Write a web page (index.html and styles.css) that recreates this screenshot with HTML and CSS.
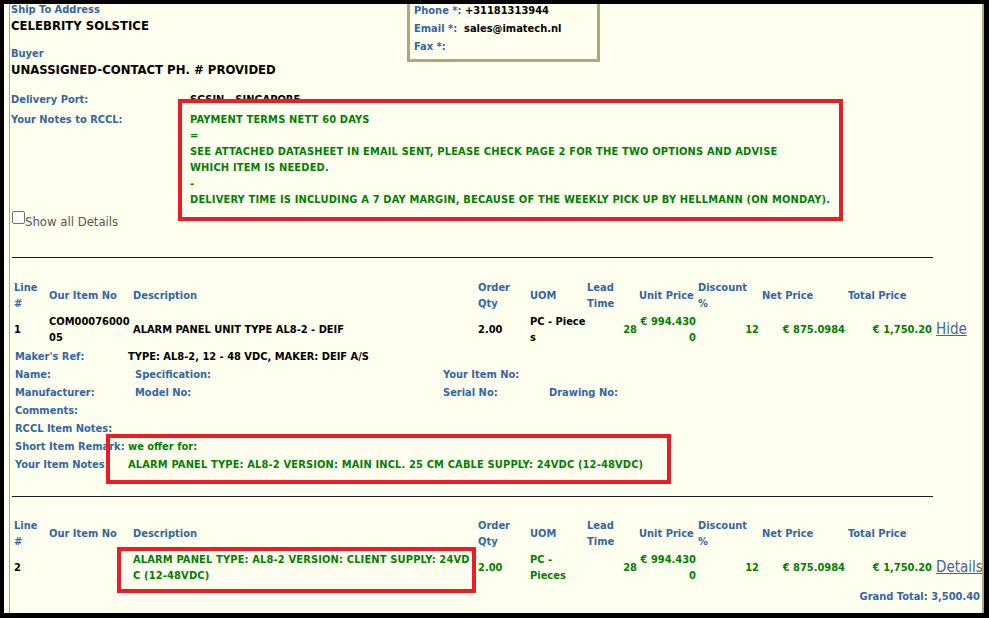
FILE: index.html
```html
<!DOCTYPE html>
<html>
<head>
<meta charset="utf-8">
<title>Quote</title>
<link rel="stylesheet" href="styles.css">
</head>
<body>
<div class="screen">
  <div class="page">
    <div class="sheet">
      <div class="scroll">
        <div class="top">
          <div class="addr">
            <div class="lbl">Ship To Address</div>
            <div class="big">CELEBRITY SOLSTICE</div>
            <div class="lbl buyer">Buyer</div>
            <div class="big">UNASSIGNED-CONTACT PH. # PROVIDED</div>
          </div>
          <div class="contact">
            <div class="crow"><span class="lbl2">Phone *:</span> <span class="val">+31181313944</span></div>
            <div class="crow"><span class="lbl2">Email *:</span>&nbsp; <span class="val">sales@imatech.nl</span></div>
            <div class="crow"><span class="lbl2">Fax *:</span></div>
          </div>
        </div>

        <div class="notes">
          <span class="nl">Delivery Port:</span><span class="val">SGSIN - SINGAPORE</span>
          <span class="nl">Your Notes to RCCL:</span>
          <div class="green">PAYMENT TERMS NETT 60 DAYS<br>=<br>SEE ATTACHED DATASHEET IN EMAIL SENT, PLEASE CHECK PAGE 2 FOR THE TWO OPTIONS AND ADVISE<br>WHICH ITEM IS NEEDED.<br>-<br>DELIVERY TIME IS INCLUDING A 7 DAY MARGIN, BECAUSE OF THE WEEKLY PICK UP BY HELLMANN (ON MONDAY).</div>
        </div>

        <label class="showall"><input type="checkbox" class="cb">Show all Details</label>

        <div class="rule"></div>

        <div class="items">
          <div class="c h">Line #</div>
          <div class="c h c2">Our Item No</div>
          <div class="c h">Description</div>
          <div class="c h">Order Qty</div>
          <div class="c h c5">UOM</div>
          <div class="c h">Lead Time</div>
          <div class="c h c7">Unit Price</div>
          <div class="c h">Discount %</div>
          <div class="c h">Net Price</div>
          <div class="c h">Total Price</div>
          <div class="c"></div>

          <div class="c">1</div>
          <div class="c c2 ba">COM0007600005</div>
          <div class="c">ALARM PANEL UNIT TYPE AL8-2 - DEIF</div>
          <div class="c">2.00</div>
          <div class="c c5 ba">PC - Pieces</div>
          <div class="c num g">28</div>
          <div class="c num c7 g ba">€ 994.4300</div>
          <div class="c num g">12</div>
          <div class="c num g">€ 875.0984</div>
          <div class="c num g">€ 1,750.20</div>
          <div class="c"><a class="lnk" href="#">Hide</a></div>
        </div>

        <div class="details">
          <div class="drow"><span class="dl w113">Maker's Ref:</span><span class="dv">TYPE: AL8-2, 12 - 48 VDC, MAKER: DEIF A/S</span></div>
          <div class="drow"><span class="dl w120">Name:</span><span class="dl w308">Specification:</span><span class="dl">Your Item No:</span></div>
          <div class="drow"><span class="dl w120">Manufacturer:</span><span class="dl w308">Model No:</span><span class="dl w106">Serial No:</span><span class="dl">Drawing No:</span></div>
          <div class="drow"><span class="dl">Comments:</span></div>
          <div class="drow"><span class="dl">RCCL Item Notes:</span></div>
          <div class="drow"><span class="dl w113">Short Item Remark:</span><span class="gv">we offer for:</span></div>
          <div class="drow"><span class="dl w113">Your Item Notes:</span><span class="gv wide">ALARM PANEL TYPE: AL8-2 VERSION: MAIN INCL. 25 CM CABLE SUPPLY: 24VDC (12-48VDC)</span></div>
        </div>

        <div class="rule rule2"></div>

        <div class="items items2">
          <div class="c h">Line #</div>
          <div class="c h c2">Our Item No</div>
          <div class="c h">Description</div>
          <div class="c h">Order Qty</div>
          <div class="c h c5">UOM</div>
          <div class="c h">Lead Time</div>
          <div class="c h c7">Unit Price</div>
          <div class="c h">Discount %</div>
          <div class="c h">Net Price</div>
          <div class="c h">Total Price</div>
          <div class="c"></div>

          <div class="c">2</div>
          <div class="c c2"></div>
          <div class="c g ba wide">ALARM PANEL TYPE: AL8-2 VERSION: CLIENT SUPPLY: 24VDC (12-48VDC)</div>
          <div class="c g">2.00</div>
          <div class="c c5 g">PC - Pieces</div>
          <div class="c num g">28</div>
          <div class="c num c7 g ba">€ 994.4300</div>
          <div class="c num g">12</div>
          <div class="c num g">€ 875.0984</div>
          <div class="c num g">€ 1,750.20</div>
          <div class="c"><a class="lnk" href="#">Details</a></div>
        </div>

        <div class="grand">Grand Total: 3,500.40</div>
      </div>
    </div>
  </div>

  <div class="mark mark1"></div>
  <div class="mark mark2"></div>
  <div class="mark mark3"></div>
</div>
</body>
</html>
```

FILE: styles.css
```css
html, body {
  margin: 0;
  padding: 0;
  background: #000;
}

body {
  font-family: "DejaVu Sans Condensed", "DejaVu Sans", sans-serif;
  font-size: 11px;
  color: #000;
}

.screen {
  position: relative;
  width: 989px;
  height: 618px;
  box-sizing: border-box;
  padding: 4px 5px 5px 4px;
  background: #000;
}

.page {
  height: 609px;
  background: #fffff0;
  padding-left: 5px;
  overflow: hidden;
}

.sheet {
  height: 100%;
  border-left: 1px solid #b3a677;
  border-right: 2px solid #b3a677;
  overflow: hidden;
}

.scroll {
  margin-top: -2px;
}

/* top block */
.top {
  display: flex;
  align-items: flex-start;
}

.addr {
  width: 396px;
  padding-left: 1px;
}

.lbl,
.lbl2,
.nl,
.h,
.dl,
.grand {
  color: #3465a4;
  font-weight: bold;
}

.lbl {
  font-size: 11px;
  line-height: 16px;
}

.big {
  font-size: 13px;
  font-weight: bold;
  line-height: 16px;
  color: #000;
}

.buyer {
  margin-top: 12px;
}

.contact {
  margin-top: -3px;
  width: 193px;
  height: 63px;
  box-sizing: border-box;
  border: 3px solid #b5a67a;
  padding: 0 0 3px 4px;
  font-size: 11px;
  line-height: 18px;
  font-weight: bold;
}

.crow {
  height: 18px;
  white-space: nowrap;
}

.val {
  font-weight: bold;
  color: #000;
}

/* notes */
.notes {
  margin-top: 14px;
  padding-left: 1px;
  display: grid;
  grid-template-columns: 179px auto;
  row-gap: 4px;
  font-size: 11px;
  line-height: 16px;
  font-weight: bold;
}

.green {
  color: #008000;
  font-weight: bold;
  letter-spacing: 0.17px;
}

.wide {
  letter-spacing: 0.15px;
}

.showall {
  margin-top: 6px;
  padding-left: 2px;
  display: flex;
  height: 16px;
  font-size: 13px;
  line-height: 16px;
  color: #555555;
}

.cb {
  -webkit-appearance: none;
  appearance: none;
  flex: none;
  width: 13px;
  height: 13px;
  margin: -3px 0 0 0;
  box-sizing: border-box;
  border: 1px solid #707070;
  border-radius: 2px;
  background: #fff;
}

.rule {
  margin: 27px 0 0 2px;
  width: 921px;
  border-top: 1px solid #1a1a1a;
}

.rule2 {
  margin-top: 22px;
}

/* items table */
.items {
  margin: 21px 0 0 3px;
  display: grid;
  grid-template-columns: 35px 84px 345px 52px 57px 53px 58px 64px 86px 87px 1fr;
  align-items: center;
}

.items2 {
  margin-top: 20px;
}

.c {
  padding: 1px 2px 1px 1px;
  font-size: 11px;
  line-height: 16px;
  font-weight: bold;
}

.c2 {
  padding-right: 0;
}

.c5 {
  padding-right: 0;
}

.c7 {
  padding-left: 0;
  padding-right: 1px;
}

.num {
  text-align: right;
}

.g {
  color: #008000;
}

.ba {
  word-break: break-all;
}

.lnk {
  padding-left: 1px;
  font-size: 15px;
  font-weight: normal;
  color: #3d64a0;
  text-decoration: underline;
}

/* detail rows */
.details {
  margin-top: 1px;
  padding-left: 5px;
  font-size: 11px;
  line-height: 18px;
}

.drow {
  display: flex;
  height: 18px;
  white-space: nowrap;
}

.dl {
  flex: none;
}

.w113 { width: 113px; }
.w120 { width: 120px; }
.w308 { width: 308px; }
.w106 { width: 106px; }

.dv {
  font-weight: bold;
  color: #000;
}

.gv {
  font-weight: bold;
  color: #008000;
}

.grand {
  margin-top: 4px;
  padding-right: 2px;
  text-align: right;
  font-size: 11px;
  line-height: 16px;
}

/* red annotation boxes drawn over the screenshot */
.mark {
  position: absolute;
  box-sizing: border-box;
  border: 4px solid #ec1c24;
}

.mark1 {
  left: 178px;
  top: 99px;
  width: 665px;
  height: 122px;
}

.mark2 {
  left: 106px;
  top: 434px;
  width: 565px;
  height: 50px;
}

.mark3 {
  left: 117px;
  top: 547px;
  width: 359px;
  height: 46px;
}
```
